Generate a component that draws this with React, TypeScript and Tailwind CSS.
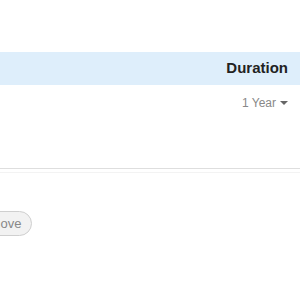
export default function App() {
  return (
    <main className="w-[300px] h-[300px] overflow-hidden bg-white font-['Liberation_Sans',Arial,sans-serif]">
      <div className="h-[52px]" />

      {/* table header */}
      <div className="h-[33px] bg-[#deeefb] flex items-center justify-end pr-[12px]">
        <span className="text-[15px] font-bold text-[#222]">Duration</span>
      </div>

      {/* row */}
      <div className="h-[83px] flex justify-end pr-[12px] pt-[10px]">
        <button className="flex items-center gap-[4px] text-[12px] leading-[16px] text-[#888] h-[16px]">
          1 Year
          <span className="w-0 h-0 border-x-[4px] border-x-transparent border-t-[4px] border-t-[#666]" />
        </button>
      </div>

      <div className="border-t border-[#dedede]" />
      <div className="h-[3px]" />
      <div className="border-t border-[#f3f3f3]" />

      <div className="pt-[38px]">
        <button className="ml-[-38px] h-[25px] px-[10px] rounded-full border border-[#cfcfcf] bg-[#f2f2f2] text-[13px] text-[#888] flex items-center">
          Remove
        </button>
      </div>
    </main>
  );
}
